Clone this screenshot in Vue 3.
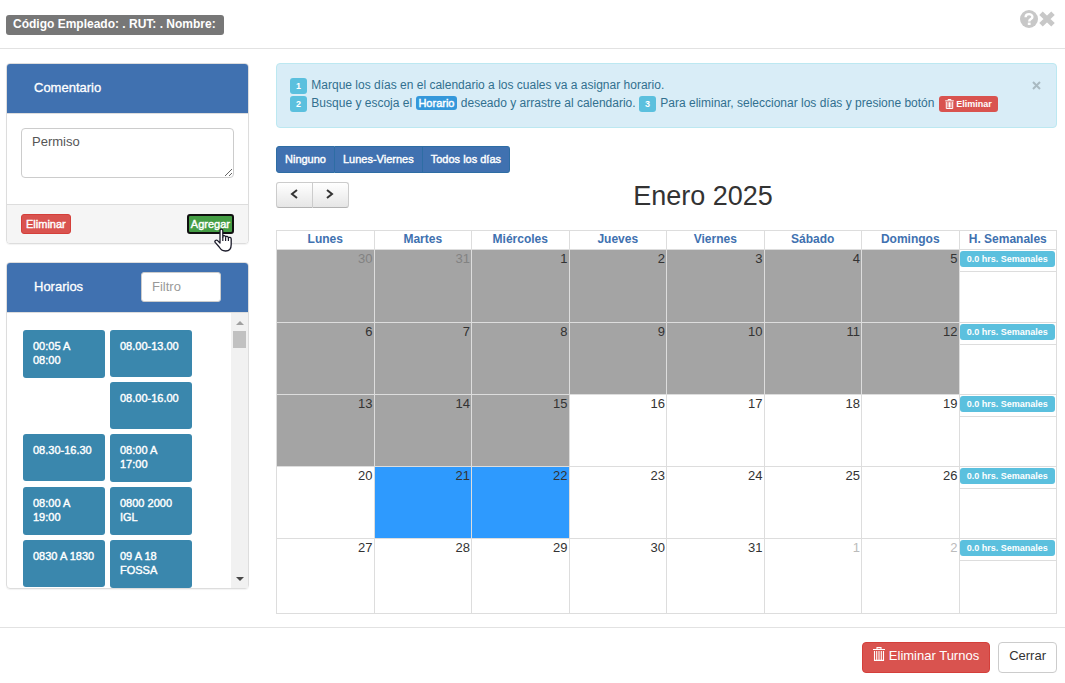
<script setup>
import { ref } from 'vue'

const comment = ref('Permiso')
const filter = ref('')

const schedules = [
  '00:05 A 08:00',
  '08.00-13.00',
  '08.00-16.00',
  '08.30-16.30',
  '08:00 A 17:00',
  '08:00 A 19:00',
  '0800 2000 IGL',
  '0830 A 1830',
  '09 A 18 FOSSA',
]

const headings = ['Lunes', 'Martes', 'Miércoles', 'Jueves', 'Viernes', 'Sábado', 'Domingos', 'H. Semanales']

const dayFor = (offset) => {
  if (offset < 1) return { n: 31 + offset, past: true, other: true }
  if (offset > 31) return { n: offset - 31, other: true }
  return { n: offset, past: offset < 16, selected: offset === 21 || offset === 22 }
}
const weeks = Array.from({ length: 5 }, (_, w) =>
  Array.from({ length: 7 }, (_, d) => dayFor(w * 7 + d - 1))
)
</script>

<template>
  <div class="dialog">
    <header class="top">
      <h1 class="employee">Código Empleado: . RUT: . Nombre:</h1>
      <div class="top-actions">
        <button class="icon-btn" aria-label="Ayuda">
          <svg viewBox="0 0 18 18" width="18" height="18">
            <circle cx="9" cy="9" r="9" fill="#c8c8c8" />
            <path d="M5.6 7.2C5.6 3.2 12.4 3.2 12.4 7C12.4 9.2 9.2 9 9.2 11.4" fill="none" stroke="#fff" stroke-width="2.4" />
            <rect x="7.8" y="12.6" width="2.8" height="2.4" fill="#fff" />
          </svg>
        </button>
        <button class="icon-btn" aria-label="Cerrar ventana">
          <svg viewBox="0 0 18 18" width="18" height="18">
            <path d="M3 3.2L15 14.8M15 3.2L3 14.8" stroke="#c8c8c8" stroke-width="5" />
          </svg>
        </button>
      </div>
    </header>

    <main class="content">
      <aside class="side">
        <section class="panel">
          <div class="panel-head"><label for="comment">Comentario</label></div>
          <div class="comment-body">
            <textarea id="comment" v-model="comment"></textarea>
          </div>
          <div class="panel-foot">
            <button class="mini danger">Eliminar</button>
            <div class="add-wrap">
              <button class="mini success">Agregar</button>
              <svg class="pointer" viewBox="0 0 18 24" width="18" height="24" aria-hidden="true">
                <path d="M6 14V2.8C6 .6 8.8 .6 8.8 2.8V9C9.2 7 11.6 7.4 11.6 9.2C12 7.8 14.2 8 14.4 10C15 8.8 17.2 9.2 17.2 11V16.5C17.2 20.5 15 23 11.6 23C8 23 7 21.8 5.2 19L1.2 14.4C.2 12.8 2 11.4 3.6 12.6L6 15Z" fill="#fff" stroke="#1b1b2a" stroke-width="1.3" stroke-linejoin="round" />
                <path d="M8.8 9V13M11.6 9.4V13M14.4 10V13" stroke="#1b1b2a" stroke-width="1.2" />
              </svg>
            </div>
          </div>
        </section>

        <section class="panel">
          <div class="panel-head">
            <label for="filter">Horarios</label>
            <input id="filter" v-model="filter" type="text" placeholder="Filtro" />
          </div>
          <div class="list-row">
            <div class="tiles">
              <button v-for="s in schedules" :key="s" class="tile">{{ s }}</button>
            </div>
            <div class="track" aria-hidden="true">
              <svg viewBox="0 0 8 4" width="8" height="4"><path d="M0 4L4 0L8 4Z" fill="#a0a0a0" /></svg>
              <span class="thumb"></span>
              <svg viewBox="0 0 8 4" width="8" height="4"><path d="M0 0L4 4L8 0Z" fill="#484848" /></svg>
            </div>
          </div>
        </section>
      </aside>

      <section class="main">
        <div class="alert">
          <div>
            <p><span class="badge">1</span> Marque los días en el calendario a los cuales va a asignar horario.</p>
            <p>
              <span class="badge">2</span> Busque y escoja el <span class="event">Horario</span> deseado y arrastre al calendario.
              <span class="badge">3</span> Para eliminar, seleccionar los días y presione botón
              <span class="badge red"><svg class="trash" viewBox="0 0 12 14" width="9" height="10" aria-hidden="true">
                <path d="M4 2V.7H8V2M0 2.6H12M1.5 4V13.3H10.5V4M4 4.5V12M6 4.5V12M8 4.5V12" fill="none" stroke="#fff" stroke-width="1.4" />
              </svg> Eliminar</span>
            </p>
          </div>
          <button class="dismiss" aria-label="Cerrar aviso">
            <svg viewBox="0 0 9 9" width="9" height="9"><path d="M1 1L8 8M8 1L1 8" stroke="#a9bac2" stroke-width="2" /></svg>
          </button>
        </div>

        <div class="presets">
          <button>Ninguno</button>
          <button>Lunes-Viernes</button>
          <button>Todos los días</button>
        </div>

        <div class="toolbar">
          <div class="nav">
            <button aria-label="Mes anterior">
              <svg viewBox="0 0 8 10" width="8" height="10"><path d="M7 1L2 5L7 9" fill="none" stroke="#333" stroke-width="2" /></svg>
            </button>
            <button aria-label="Mes siguiente">
              <svg viewBox="0 0 8 10" width="8" height="10"><path d="M1 1L6 5L1 9" fill="none" stroke="#333" stroke-width="2" /></svg>
            </button>
          </div>
          <h2>Enero 2025</h2>
        </div>

        <table class="calendar">
          <thead>
            <tr><th v-for="h in headings" :key="h" scope="col">{{ h }}</th></tr>
          </thead>
          <tbody>
            <tr v-for="(week, i) in weeks" :key="i">
              <td
                v-for="day in week"
                :key="day.n"
                :class="{ past: day.past, selected: day.selected, other: day.other }"
              >{{ day.n }}</td>
              <td class="hours"><div><span class="badge total">0.0 hrs. Semanales</span></div></td>
            </tr>
          </tbody>
        </table>
      </section>
    </main>

    <footer class="bottom">
      <button class="btn danger">
        <svg class="trash" viewBox="0 0 12 14" width="12" height="14" aria-hidden="true">
          <path d="M4 2V.6H8V2M0 2.5H12M1.5 4V13.4H10.5V4M3.7 4V13M6 4V13M8.3 4V13" fill="none" stroke="#fff" stroke-width="1.1" />
        </svg>
        Eliminar Turnos
      </button>
      <button class="btn">Cerrar</button>
    </footer>
  </div>
</template>

<style>
body {
  margin: 0;
  background: #fff;
}
</style>

<style scoped>
.dialog,
.dialog * {
  box-sizing: border-box;
}
.dialog {
  font-family: "Liberation Sans", Arial, sans-serif;
  font-size: 13px;
  line-height: 18px;
  color: #333;
}
button,
input,
textarea {
  font: inherit;
  margin: 0;
}
button {
  cursor: pointer;
}
.top {
  display: flex;
  justify-content: space-between;
  align-items: flex-start;
  height: 49px;
  padding: 10px 9px 0 6px;
  border-bottom: 1px solid #e2e2e2;
}
.employee {
  margin: 5px 0 0;
  padding: 0 8px 1px 7px;
  border-radius: 3px;
  background: #777;
  color: #fff;
  font-size: 12px;
  line-height: 19px;
}
.top-actions {
  display: flex;
}
.icon-btn,
.dismiss {
  display: flex;
  padding: 0;
  border: 0;
  background: none;
}
.content {
  display: grid;
  grid-template-columns: 243px 1fr;
  gap: 27px;
  align-items: start;
  padding: 14px 8px 13px 6px;
}
.side {
  display: grid;
  gap: 18px;
}
.panel {
  border: 1px solid #ddd;
  border-radius: 4px;
  box-shadow: 0 1px 1px rgba(0, 0, 0, 0.05);
}
.panel-head {
  display: flex;
  align-items: center;
  justify-content: space-between;
  height: 50px;
  padding: 0 27px 2px;
  border-bottom: 1px solid #ddd;
  border-radius: 3px 3px 0 0;
  background: #4071b0;
  color: #fff;
  -webkit-text-stroke: 0.3px #fff;
}
.panel-head input {
  width: 80px;
  height: 30px;
  padding: 0 10px;
  border: 1px solid #ccc;
  border-radius: 3px;
  color: #555;
  -webkit-text-stroke: 0;
}
.panel-head input::placeholder {
  color: #999;
}
.comment-body {
  padding: 14px 14px 26px;
}
textarea {
  display: block;
  width: 100%;
  height: 50px;
  padding: 4px 10px;
  border: 1px solid #ccc;
  border-radius: 4px;
  color: #555;
  resize: vertical;
}
.panel-foot {
  display: flex;
  justify-content: space-between;
  align-items: center;
  height: 39px;
  padding: 0 14px;
  border-top: 1px solid #ddd;
  border-radius: 0 0 3px 3px;
  background: #f5f5f5;
}
.mini {
  display: block;
  height: 20px;
  padding: 0 4px;
  border: 1px solid #d43f3a;
  border-radius: 3px;
  color: #fff;
  font-size: 11px;
  line-height: 16px;
  -webkit-text-stroke: 0.4px #fff;
}
.danger {
  background: #d9534f;
}
.success {
  border: 2px solid #101010;
  background: #449d44;
  padding: 0 2px;
}
.add-wrap {
  position: relative;
}
.pointer {
  position: absolute;
  left: 27px;
  top: 14px;
}
.list-row {
  display: flex;
  height: 275px;
}
.tiles {
  flex: 1;
  overflow: hidden;
  padding: 17px 0 0 16px;
}
.tile {
  float: left;
  display: flex;
  align-items: flex-start;
  width: 82px;
  min-height: 47px;
  margin: 0 5px 5px 0;
  padding: 9px 8px 11px 10px;
  border: 0;
  border-radius: 3px;
  background: #3a87ad;
  color: #fff;
  font-size: 11px;
  line-height: 14px;
  text-align: left;
  -webkit-text-stroke: 0.4px #fff;
}
.track {
  display: flex;
  flex-direction: column;
  align-items: center;
  width: 17px;
  padding: 8px 0 7px;
  background: #f1f1f1;
}
.thumb {
  width: 13px;
  height: 17px;
  margin: 6px 0 auto;
  background: #c1c1c1;
}
.main {
  min-width: 0;
}
.alert {
  display: flex;
  justify-content: space-between;
  height: 65px;
  padding: 12px 15px 0 13px;
  border: 1px solid #bce8f1;
  border-radius: 4px;
  background: #d9edf7;
  color: #31708f;
  font-size: 12px;
}
.alert p {
  margin: 0;
  white-space: nowrap;
}
.badge {
  display: inline-block;
  padding: 0 6px;
  border-radius: 3px;
  background: #5bc0de;
  color: #fff;
  font-size: 9px;
  font-weight: bold;
  line-height: 16px;
}
.alert .badge {
  margin-right: 1px;
}
.alert .red {
  margin: 0 0 0 1px;
  background: #d9534f;
}
.red .trash {
  vertical-align: -2px;
}
.event {
  margin: 0 1px;
  padding: 1px 2px;
  border-radius: 3px;
  background: #3498db;
  color: #fff;
  font-size: 11px;
  -webkit-text-stroke: 0.4px #fff;
}
.dismiss {
  margin-top: 5px;
  align-self: flex-start;
}
.presets {
  display: flex;
  margin-top: 18px;
}
.presets button {
  height: 27px;
  padding: 0 8px 1px;
  border: 1px solid #2e6da4;
  border-left-width: 0;
  background: #4071b0;
  color: #fff;
  font-size: 11px;
  -webkit-text-stroke: 0.4px #fff;
}
.presets button:first-child {
  border-left-width: 1px;
  border-radius: 3px 0 0 3px;
}
.presets button:last-child {
  border-radius: 0 3px 3px 0;
}
.toolbar {
  display: grid;
  grid-template-columns: 73px 1fr;
  align-items: center;
  height: 57px;
  padding-bottom: 13px;
}
.nav {
  display: flex;
}
.nav button {
  display: flex;
  align-items: center;
  justify-content: center;
  width: 37px;
  height: 26px;
  padding: 0 0 2px;
  border: 1px solid #ccc;
  border-bottom-color: #b3b3b3;
  border-radius: 3px 0 0 3px;
  background: linear-gradient(#fff, #e6e6e6);
}
.nav button + button {
  border-left: 0;
  border-radius: 0 3px 3px 0;
}
h2 {
  margin: 0;
  padding-top: 2px;
  font-size: 27px;
  line-height: 30px;
  font-weight: normal;
  text-align: center;
}
.calendar {
  width: 100%;
  border-collapse: collapse;
  table-layout: fixed;
}
.calendar th {
  height: 19px;
  padding: 0;
  border: 1px solid #ddd;
  color: #4071b0;
  font-size: 12px;
  line-height: 16px;
  vertical-align: top;
}
.calendar td {
  height: 72px;
  padding: 0 1px;
  border: 1px solid #ddd;
  text-align: right;
  vertical-align: top;
}
.calendar tbody tr:first-child td {
  height: 73px;
}
.calendar tbody tr:last-child td {
  height: 75px;
}
.calendar .past {
  background: #a4a4a4;
}
.calendar .selected {
  background: #2e9afe;
}
.calendar .other {
  color: #bbb;
}
.calendar .past.other {
  color: #828282;
}
.calendar tbody .hours {
  padding: 0;
}
.hours div {
  height: 22px;
  padding: 1px 1px 0 0;
  border-bottom: 1px solid #ddd;
}
.total {
  display: block;
  padding: 0;
  text-align: center;
}
.bottom {
  display: flex;
  justify-content: flex-end;
  gap: 8px;
  padding: 14px 8px 10px;
  border-top: 1px solid #e2e2e2;
}
.btn {
  height: 31px;
  padding: 0 10px 3px;
  border: 1px solid #ccc;
  border-radius: 4px;
  background: #fff;
  color: #333;
}
.btn.danger {
  border-color: #d43f3a;
  background: #d9534f;
  color: #fff;
}
.btn .trash {
  vertical-align: -1px;
}
</style>
